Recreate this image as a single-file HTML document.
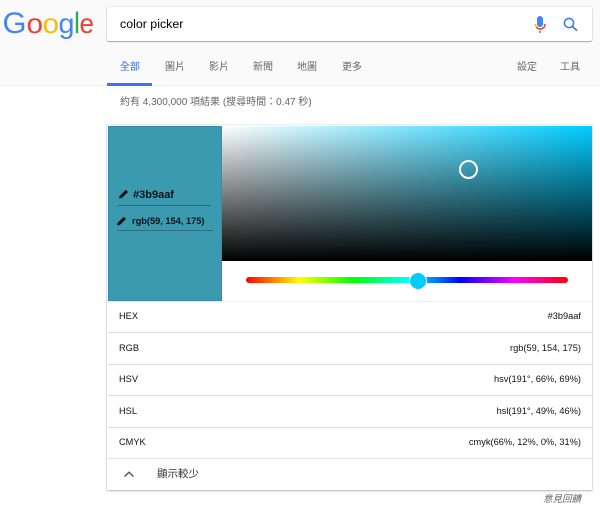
<!DOCTYPE html>
<html><head><meta charset="utf-8">
<style>
html,body{margin:0;padding:0;background:#fff}
body{width:600px;height:511px;position:relative;overflow:hidden;font-family:"Liberation Sans","Noto Sans CJK TC",sans-serif;color:#222}
.a{position:absolute;white-space:nowrap;line-height:1}
.tab{font-size:10px;color:#666;top:63px}
.row{position:absolute;left:108px;width:484px;height:1px;background:#e0e0e0}
.l{position:absolute;left:119px;font-size:9.25px;color:#111;line-height:1;white-space:nowrap}
.r{position:absolute;right:19px;font-size:9.25px;color:#111;line-height:1;white-space:nowrap}
</style></head><body>
<div class="a" style="left:0;top:0;width:600px;height:85px;background:#fafafa;border-bottom:1px solid #ebebeb"></div>
<svg class="a" style="left:0;top:0" width="100" height="45" font-family="Liberation Sans">
<text x="2.5" y="33" fill="#4285f4" font-size="30" textLength="24" lengthAdjust="spacingAndGlyphs">G</text>
<text x="26.5" y="33" fill="#ea4335" font-size="28" textLength="16.5" lengthAdjust="spacingAndGlyphs">o</text>
<text x="42.5" y="33" fill="#fbbc05" font-size="28" textLength="16.5" lengthAdjust="spacingAndGlyphs">o</text>
<text x="58.5" y="33" fill="#4285f4" font-size="28" textLength="16" lengthAdjust="spacingAndGlyphs">g</text>
<text x="74" y="33" fill="#34a853" font-size="30" textLength="6" lengthAdjust="spacingAndGlyphs">l</text>
<text x="79.5" y="33" fill="#ea4335" font-size="28" textLength="14.5" lengthAdjust="spacingAndGlyphs">e</text>
</svg>
<div class="a" style="left:107px;top:7px;width:485px;height:34px;background:#fff;border-radius:2px;box-shadow:0 1px 1px rgba(0,0,0,.3),0 0 0 1px rgba(0,0,0,.06)"></div>
<div class="a" style="left:120px;top:18px;font-size:12.4px;color:#000">color picker</div>
<svg class="a" style="left:533px;top:14px" width="15" height="20">
<rect x="4" y="2" width="6" height="11" rx="3" fill="#4285f4"/>
<path d="M2.5 10 A4.7 4.7 0 0 0 4 13.6" stroke="#fbbc05" stroke-width="1.6" fill="none"/>
<path d="M3.6 13.2 A4.7 4.7 0 0 0 12 10" stroke="#ea4335" stroke-width="1.6" fill="none"/>
<rect x="6.2" y="16.5" width="1.6" height="2.5" fill="#34a853"/>
</svg>
<svg class="a" style="left:562px;top:16px" width="18" height="18">
<circle cx="7" cy="7" r="4.6" fill="none" stroke="#3b78e7" stroke-width="1.5"/>
<path d="M10.4 10.4 L15 14.6" stroke="#3b78e7" stroke-width="1.7"/>
</svg>
<div class="a tab" style="left:120px;color:#2a6fe0">全部</div>
<div class="a" style="left:107px;top:83px;width:45px;height:2.5px;background:#3b78e7"></div>
<div class="a tab" style="left:165px">圖片</div>
<div class="a tab" style="left:209px">影片</div>
<div class="a tab" style="left:253px">新聞</div>
<div class="a tab" style="left:297px">地圖</div>
<div class="a tab" style="left:342px">更多</div>
<div class="a tab" style="left:517px">設定</div>
<div class="a tab" style="left:560px">工具</div>
<div class="a" style="left:120px;top:98px;font-size:10px;color:#666">約有 4,300,000 項結果 (搜尋時間：0.47 秒)</div>

<div class="a" style="left:107px;top:125px;width:485px;height:365px;background:#fff;box-shadow:0 1px 2px rgba(0,0,0,.25),0 0 0 1px rgba(0,0,0,.05)"></div>
<div class="a" style="left:108px;top:126px;width:114px;height:175px;background:#3b9aaf;box-shadow:inset 0 0 0 1px #2f8fa6"></div>
<div class="a" style="left:222px;top:126px;width:370px;height:135px;background:linear-gradient(to top,#000,rgba(0,0,0,0)),linear-gradient(to right,#fff,#00ccff)"></div>
<svg class="a" style="left:118px;top:188px" width="12" height="12"><path d="M1 10.5 L1.6 8 L7.8 1.8 L10 4 L3.8 10 Z" fill="#111"/></svg>
<div class="a" style="left:133px;top:190px;font-size:11px;font-weight:bold;color:#06141a">#3b9aaf</div>
<div class="a" style="left:118px;top:205px;width:93px;height:1px;background:#2b6f7f"></div>
<svg class="a" style="left:116px;top:215px" width="12" height="12"><path d="M1 10.5 L1.6 8 L7.8 1.8 L10 4 L3.8 10 Z" fill="#111"/></svg>
<div class="a" style="left:132px;top:217px;font-size:9.25px;font-weight:bold;color:#06141a">rgb(59, 154, 175)</div>
<div class="a" style="left:117px;top:230px;width:96px;height:1px;background:#2b6f7f"></div>
<div class="a" style="left:459px;top:160px;width:15px;height:15px;border:2px solid #fff;border-radius:50%"></div>
<div class="a" style="left:246px;top:277px;width:322px;height:6px;border-radius:3px;background:linear-gradient(to right,#f00 0%,#ff0 16.67%,#0f0 33.33%,#0ff 50%,#00f 66.67%,#f0f 83.33%,#f00 100%)"></div>
<div class="a" style="left:410px;top:272.5px;width:16px;height:16px;border-radius:50%;background:#00ccff;box-shadow:0 0 0 1px #fff"></div>

<div class="row" style="top:301px;background:#eee"></div>
<div class="row" style="top:332px"></div>
<div class="row" style="top:364px"></div>
<div class="row" style="top:395px"></div>
<div class="row" style="top:427px"></div>
<div class="row" style="top:458px"></div>
<div class="l" style="top:312px">HEX</div><div class="r" style="top:312px">#3b9aaf</div>
<div class="l" style="top:344px">RGB</div><div class="r" style="top:344px">rgb(59, 154, 175)</div>
<div class="l" style="top:375px">HSV</div><div class="r" style="top:375px">hsv(191°, 66%, 69%)</div>
<div class="l" style="top:407px">HSL</div><div class="r" style="top:407px">hsl(191°, 49%, 46%)</div>
<div class="l" style="top:438px">CMYK</div><div class="r" style="top:438px">cmyk(66%, 12%, 0%, 31%)</div>
<svg class="a" style="left:122px;top:469px" width="14" height="10"><path d="M2.5 7.5 L7 3.2 L11.5 7.5" fill="none" stroke="#555" stroke-width="1.4"/></svg>
<div class="a" style="left:157px;top:469px;font-size:10.5px;color:#333">顯示較少</div>
<div class="a" style="right:19px;top:495px;font-size:9.5px;font-style:italic;color:#666">意見回饋</div>
</body></html>
